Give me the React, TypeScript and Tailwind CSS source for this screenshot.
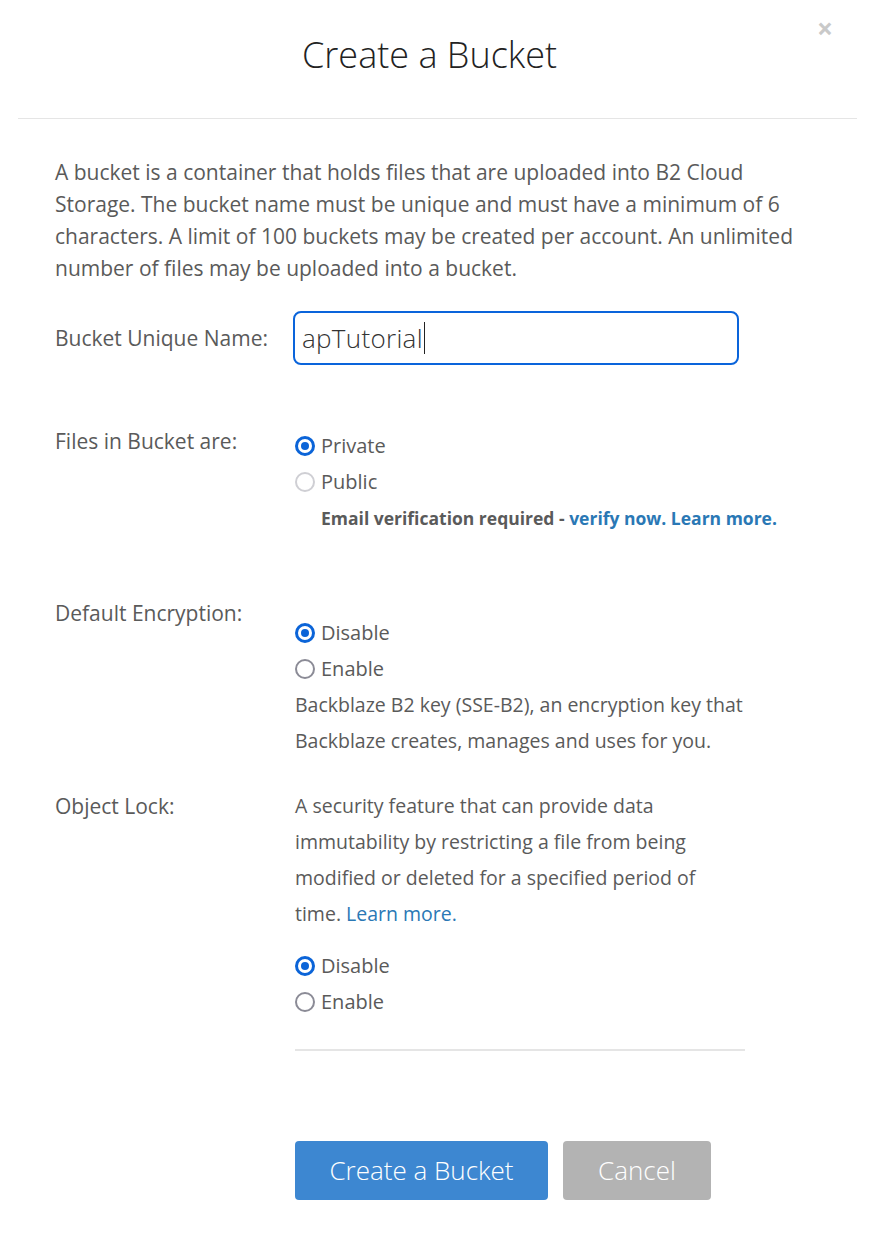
import React from "react";

function Radio({ checked, disabled, label }: { checked?: boolean; disabled?: boolean; label: string }) {
  return (
    <div className="flex items-center h-[36px]">
      <span
        className={
          "w-[20px] h-[20px] rounded-full flex items-center justify-center mr-[6px] " +
          (checked
            ? "border-[3px] border-[#0b64d8]"
            : disabled
            ? "border-2 border-[#cfcfd4]"
            : "border-2 border-[#8b8b96]")
        }
      >
        {checked && <span className="w-[8px] h-[8px] rounded-full bg-[#0b64d8]" />}
      </span>
      <span className="text-[20px] text-[#5a5a5a]">{label}</span>
    </div>
  );
}

export default function App() {
  return (
    <div
      className="relative w-[871px] h-[1239px] bg-white text-[#5a5a5a]"
      style={{ fontFamily: '"Open Sans", "Liberation Sans", sans-serif' }}
    >
      <button className="absolute left-[817px] top-[14px] text-[28px] font-bold text-[#c9c9c9] leading-none">×</button>
      <div className="h-[118px] flex items-center justify-center pr-[12px] pb-[8px]">
        <h1 className="text-[36px] font-light text-[#222]">Create a Bucket</h1>
      </div>
      <div className="ml-[18px] mr-[14px] h-px bg-[#e5e5e5]" />

      <div className="px-[55px] pt-[37px]">
        <p className="text-[21px] leading-[32px] w-[760px]">
          A bucket is a container that holds files that are uploaded into B2 Cloud Storage. The bucket name must be
          unique and must have a minimum of 6 characters. A limit of 100 buckets may be created per account. An
          unlimited number of files may be uploaded into a bucket.
        </p>

        <div className="grid grid-cols-[238px_1fr] mt-[27px] items-center">
          <div className="text-[21px] leading-[36px]">Bucket Unique Name:</div>
          <div className="w-[446px] h-[54px] border-2 border-[#0a64db] rounded-[8px] flex items-center pl-[7px]">
            <span className="text-[26px] font-light text-[#333] tracking-[0.3px]">apTutorial</span>
            <span className="w-px h-[32px] bg-[#222] ml-[1px]" />
          </div>
        </div>

        <div className="grid grid-cols-[240px_1fr] mt-[58px]">
          <div className="text-[21px] leading-[36px]">Files in Bucket are:</div>
          <div className="pt-[5px]">
            <Radio checked label="Private" />
            <Radio disabled label="Public" />
            <div className="pl-[26px] text-[17.5px] leading-[36px] font-bold text-[#5a5a5a]">
              Email verification required -{" "}
              <span className="text-[#2a78b5]">verify now. Learn more.</span>
            </div>
          </div>
        </div>

        <div className="grid grid-cols-[240px_1fr] mt-[59px]">
          <div className="text-[21px] leading-[36px]">Default Encryption:</div>
          <div className="pt-[20px]">
            <Radio checked label="Disable" />
            <Radio label="Enable" />
            <p className="text-[19.5px] leading-[36px] w-[470px]">
              Backblaze B2 key (SSE-B2), an encryption key that Backblaze creates, manages and uses for you.
            </p>
          </div>
        </div>

        <div className="grid grid-cols-[240px_1fr] mt-[29px]">
          <div className="text-[21px] leading-[36px]">Object Lock:</div>
          <div>
            <p className="text-[19.5px] leading-[36px] w-[430px]">
              A security feature that can provide data immutability by restricting a file from being modified or
              deleted for a specified period of time. <a className="text-[#2a78b5]">Learn more.</a>
            </p>
            <div className="mt-[16px]">
              <Radio checked label="Disable" />
              <Radio label="Enable" />
            </div>
            <div className="mt-[29px] w-[450px] h-[2px] bg-[#e5e5e5]" />
            <div className="mt-[90px] flex gap-[15px]">
              <button className="w-[253px] h-[59px] rounded-[4px] bg-[#3d87d1] text-white text-[26px] font-light">
                Create a Bucket
              </button>
              <button className="w-[148px] h-[59px] rounded-[4px] bg-[#b3b3b3] text-white text-[26px] font-light">
                Cancel
              </button>
            </div>
          </div>
        </div>
      </div>
    </div>
  );
}
